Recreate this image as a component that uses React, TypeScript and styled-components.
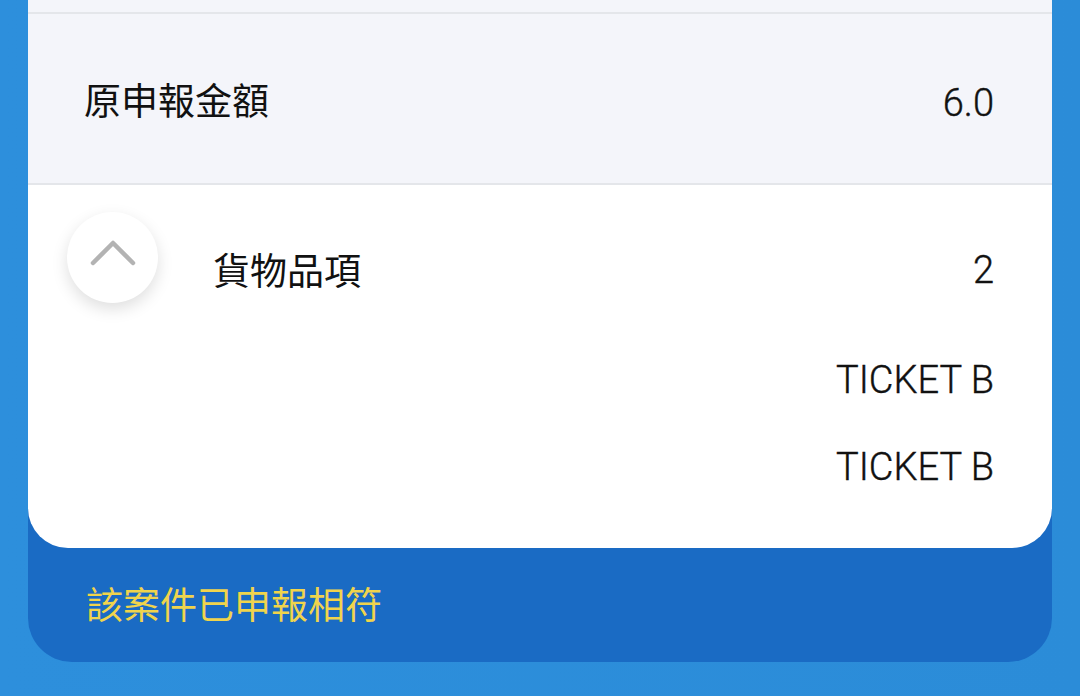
import styled, { createGlobalStyle } from "styled-components";

const GlobalStyle = createGlobalStyle`
  html, body {
    margin: 0;
    padding: 0;
    height: 100%;
    overflow: hidden;
  }
  body {
    background: linear-gradient(90deg, #2d8fdc 0%, #2b8cd8 100%);
    font-family: Roboto, "Noto Sans CJK TC", "Noto Sans", sans-serif;
    color: #111;
  }
`;

const tickets = ["TICKET B", "TICKET B"];

const App = () => {
  return (
    <>
      <GlobalStyle />
      <Page>
        <Card>
          <Panel>
            <TopStrip />
            <AmountRow>
              <Label>原申報金額</Label>
              <Value>6.0</Value>
            </AmountRow>
            <ItemsSection>
              <ItemsHeader>
                <ToggleButton aria-label="collapse">
                  <svg width="46" height="28" viewBox="0 0 46 28">
                    <path
                      d="M3 25 L23 5 L43 25"
                      fill="none"
                      stroke="#b3b3b3"
                      strokeWidth="4.5"
                      strokeLinecap="round"
                      strokeLinejoin="round"
                    />
                  </svg>
                </ToggleButton>
                <ItemsLabel>貨物品項</ItemsLabel>
                <ItemsCount>2</ItemsCount>
              </ItemsHeader>
              <TicketList>
                {tickets.map((t, i) => (
                  <Ticket key={i}>{t}</Ticket>
                ))}
              </TicketList>
            </ItemsSection>
          </Panel>
          <Footer>該案件已申報相符</Footer>
        </Card>
      </Page>
    </>
  );
};

const Page = styled.div`
  padding: 0 28px;
`;

const Card = styled.div`
  background: #1a6bc4;
  border-radius: 0 0 44px 44px;
  overflow: hidden;
`;

const Panel = styled.div`
  background: #ffffff;
  border-radius: 0 0 40px 40px;
`;

const TopStrip = styled.div`
  height: 12px;
  background: #f4f5fa;
  border-bottom: 2px solid #e4e6ea;
`;

const AmountRow = styled.div`
  box-sizing: border-box;
  height: 171px;
  padding: 9px 58px 0 56px;
  display: flex;
  align-items: center;
  justify-content: space-between;
  background: #f4f5fa;
  border-bottom: 2px solid #e4e6ea;
`;

const Label = styled.span`
  font-size: 37px;
  line-height: 50px;
`;

const Value = styled.span`
  font-size: 38px;
  line-height: 50px;
  font-weight: 300;
  -webkit-text-stroke: 0.4px #111;
`;

const ItemsSection = styled.div`
  padding: 27px 58px 56px 39px;
`;

const ItemsHeader = styled.div`
  display: flex;
  align-items: flex-start;
`;

const ToggleButton = styled.button`
  width: 91px;
  height: 91px;
  flex: none;
  border: none;
  border-radius: 50%;
  background: #ffffff;
  box-shadow: 0 6px 16px rgba(0, 0, 0, 0.13);
  display: flex;
  align-items: center;
  justify-content: center;
  padding: 0 0 12px 0;
`;

const ItemsLabel = styled.span`
  margin: 36px 0 0 55px;
  font-size: 37px;
  line-height: 50px;
  flex: 1;
`;

const ItemsCount = styled(Value)`
  margin-top: 33px;
`;

const TicketList = styled.div`
  margin-top: 52px;
  display: flex;
  flex-direction: column;
  align-items: flex-end;
  gap: 37px;
`;

const Ticket = styled(Value)``;

const Footer = styled.div`
  box-sizing: border-box;
  height: 114px;
  padding: 34px 58px 0 58px;
  font-size: 37px;
  line-height: 50px;
  color: #f0d44c;
`;

export default App;
